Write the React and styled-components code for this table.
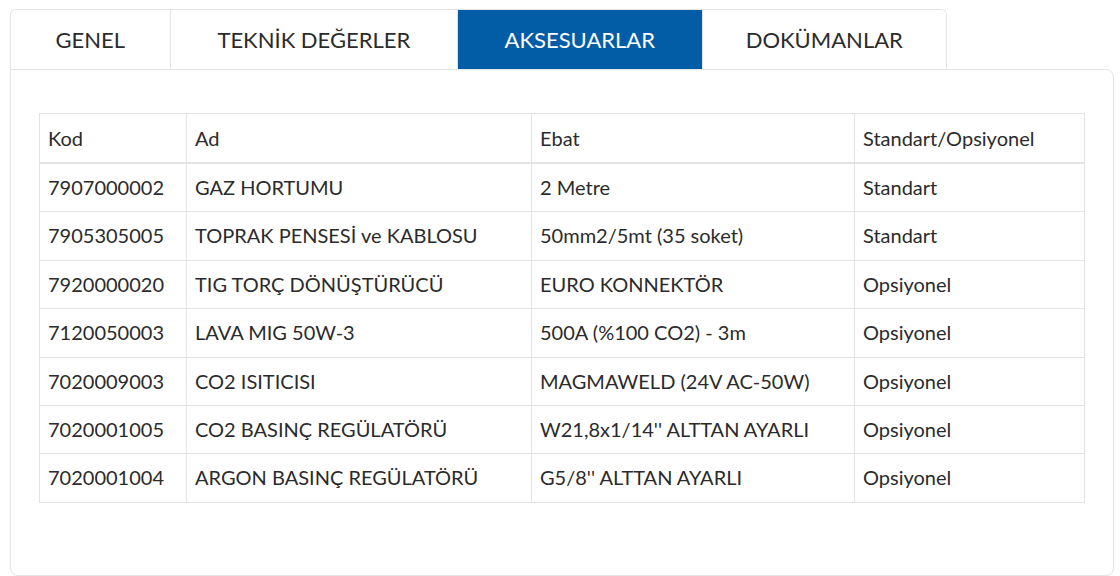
import React from "react";
import styled, { createGlobalStyle } from "styled-components";

const GlobalStyle = createGlobalStyle`
  html, body {
    margin: 0;
    background: #fff;
  }
  body {
    padding: 9px 6px 0 10px;
    font-family: Lato, "Open Sans", sans-serif;
    color: #2b2b2b;
  }
`;

const TabBar = styled.ul`
  display: flex;
  list-style: none;
  margin: 0;
  padding: 0;
  width: 937px;
  border: 1px solid #e3e3e3;
  border-bottom: none;
  border-radius: 6px 6px 0 0;
  overflow: hidden;
  box-sizing: border-box;
`;

const Tab = styled.li`
  width: ${(p) => p.w}px;
  height: 59px;
  display: flex;
  align-items: center;
  justify-content: center;
  font-size: 22px;
  text-transform: uppercase;
  color: ${(p) => (p.active ? "#fff" : "#2b2b2b")};
  background: ${(p) => (p.active ? "#035ca6" : "#fff")};
  border-right: ${(p) => (p.last ? "none" : "1px solid #e3e3e3")};
  box-sizing: border-box;
`;

const Panel = styled.div`
  width: 1104px;
  height: 507px;
  border: 1px solid #e3e3e3;
  border-radius: 0 8px 8px 8px;
  box-sizing: border-box;
  padding: 43px 28px 0 28px;
`;

const Table = styled.table`
  width: 1046px;
  table-layout: fixed;
  border-collapse: collapse;
  font-size: 20px;
`;

const Th = styled.th`
  text-align: left;
  font-weight: 400;
  padding: 12px 8px;
  line-height: 24px;
  border: 1px solid #e3e3e3;
  border-bottom: 2px solid #e3e3e3;
  width: ${(p) => (p.w ? `${p.w}px` : "auto")};
  white-space: nowrap;
`;

const Td = styled.td`
  padding: 12px 8px;
  line-height: 23.4px;
  border: 1px solid #e3e3e3;
  white-space: nowrap;
`;

const tabs = [
  { label: "GENEL", w: 160 },
  { label: "TEKNİK DEĞERLER", w: 288 },
  { label: "AKSESUARLAR", w: 245, active: true },
  { label: "DOKÜMANLAR", w: 244, last: true },
];

const rows = [
  ["7907000002", "GAZ HORTUMU", "2 Metre", "Standart"],
  ["7905305005", "TOPRAK PENSESİ ve KABLOSU", "50mm2/5mt (35 soket)", "Standart"],
  ["7920000020", "TIG TORÇ DÖNÜŞTÜRÜCÜ", "EURO KONNEKTÖR", "Opsiyonel"],
  ["7120050003", "LAVA MIG 50W-3", "500A (%100 CO2) - 3m", "Opsiyonel"],
  ["7020009003", "CO2 ISITICISI", "MAGMAWELD (24V AC-50W)", "Opsiyonel"],
  ["7020001005", "CO2 BASINÇ REGÜLATÖRÜ", "W21,8x1/14'' ALTTAN AYARLI", "Opsiyonel"],
  ["7020001004", "ARGON BASINÇ REGÜLATÖRÜ", "G5/8'' ALTTAN AYARLI", "Opsiyonel"],
];

export default function App() {
  return (
    <>
      <GlobalStyle />
      <TabBar>
        {tabs.map((t) => (
          <Tab key={t.label} w={t.w} active={t.active} last={t.last}>
            {t.label}
          </Tab>
        ))}
      </TabBar>
      <Panel>
        <Table>
          <thead>
            <tr>
              <Th w={130}>Kod</Th>
              <Th w={328}>Ad</Th>
              <Th w={306}>Ebat</Th>
              <Th>Standart/Opsiyonel</Th>
            </tr>
          </thead>
          <tbody>
            {rows.map((r) => (
              <tr key={r[0]}>
                {r.map((c, i) => (
                  <Td key={i}>{c}</Td>
                ))}
              </tr>
            ))}
          </tbody>
        </Table>
      </Panel>
    </>
  );
}
